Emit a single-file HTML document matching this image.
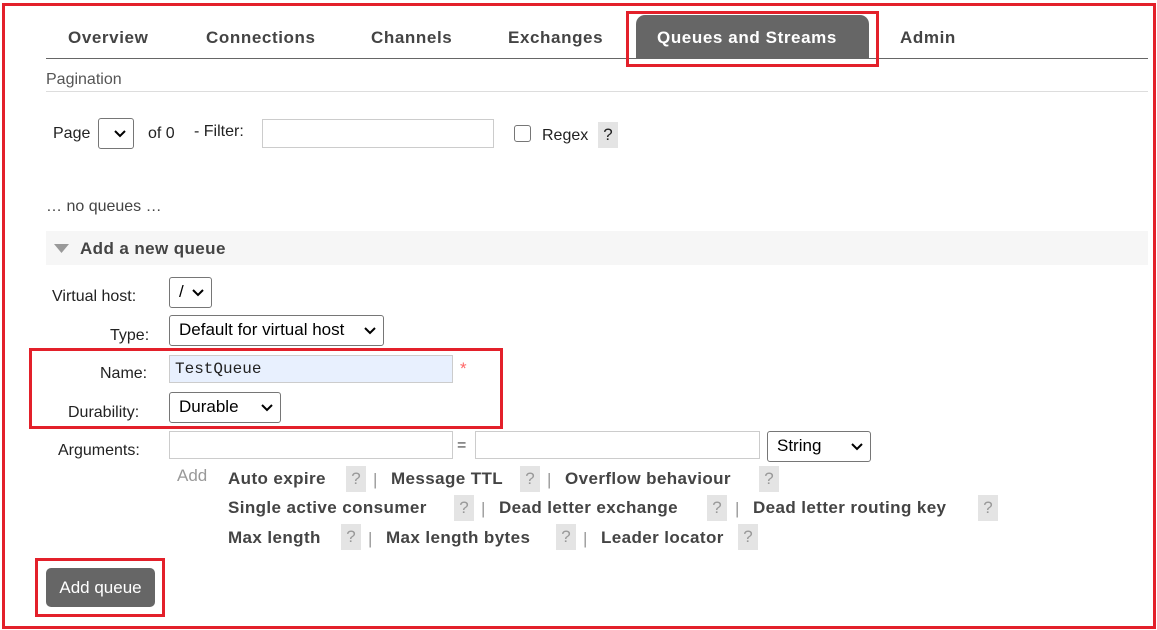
<!DOCTYPE html>
<html><head><meta charset="utf-8"><style>
body{margin:0;width:1157px;height:630px;background:#fff;position:relative;overflow:hidden;font-family:"Liberation Sans",sans-serif;color:#222}
.a{position:absolute;white-space:nowrap;line-height:20px}
.t{font-size:17px;font-weight:bold;color:#444;letter-spacing:.6px}
.b{font-size:17px;font-weight:bold;color:#444;letter-spacing:.4px}
.n{font-size:16px;color:#222}
.r{position:absolute;border:3px solid #e3202a;box-sizing:border-box}
.box{position:absolute;box-sizing:border-box}
.sel{position:absolute;box-sizing:border-box;border:1px solid #767676;border-radius:3px;background:#fff;font-size:17px;line-height:28px;padding-left:9px;color:#000}
.sel svg{position:absolute;right:7px;top:11px}
.inp{position:absolute;box-sizing:border-box;border:1px solid #ccc;background:#fff}
.q{position:absolute;width:20px;height:26px;background:#e4e4e4;color:#999;font-size:17px;text-align:center;line-height:26px}
.p{position:absolute;color:#999;font-size:17px;line-height:20px}
</style></head><body>
<div class="r" style="left:2px;top:3px;width:1154px;height:626px;border-width:3px"></div>

<div class="box" style="left:636px;top:15px;width:233px;height:44px;background:#666;border-radius:9px 9px 0 0"></div>
<div class="box" style="left:46px;top:58px;width:1102px;height:1px;background:#666"></div>
<div class="a t" style="left:68px;top:28px">Overview</div>
<div class="a t" style="left:206px;top:28px">Connections</div>
<div class="a t" style="left:371px;top:28px">Channels</div>
<div class="a t" style="left:508px;top:28px">Exchanges</div>
<div class="a t" style="left:657px;top:28px;color:#fff">Queues and Streams</div>
<div class="a t" style="left:900px;top:28px">Admin</div>
<div class="r" style="left:626px;top:11px;width:253px;height:56px"></div>

<div class="a n" style="left:46px;top:70px;color:#555;font-size:16px">Pagination</div>
<div class="box" style="left:46px;top:91px;width:1102px;height:1px;background:#ddd"></div>

<div class="a n" style="left:53px;top:124px">Page</div>
<div class="sel" style="left:98px;top:118px;width:36px;height:31px"><svg width="12" height="8" viewBox="0 0 12 8"><path d="M1 1l5 5 5-5" fill="none" stroke="#000" stroke-width="2"/></svg></div>
<div class="a n" style="left:148px;top:124px">of 0</div>
<div class="a n" style="left:194px;top:122px">- Filter:</div>
<div class="inp" style="left:262px;top:119px;width:232px;height:29px"></div>
<div class="box" style="left:514px;top:125px;width:17px;height:17px;border:1px solid #767676;border-radius:3px"></div>
<div class="a n" style="left:542px;top:126px">Regex</div>
<div class="q" style="left:598px;top:122px;color:#222">?</div>

<div class="a n" style="left:46px;top:197px;color:#444">… no queues …</div>

<div class="box" style="left:46px;top:231px;width:1102px;height:34px;background:#f6f6f6"></div>
<svg style="position:absolute;left:54px;top:244px" width="15" height="9"><path d="M0 0h15L7.5 9z" fill="#999"/></svg>
<div class="a b" style="left:80px;top:239px">Add a new queue</div>

<div class="a n" style="left:52px;top:287px">Virtual host:</div>
<div class="sel" style="left:169px;top:277px;width:43px;height:31px">/<svg width="12" height="8" viewBox="0 0 12 8"><path d="M1 1l5 5 5-5" fill="none" stroke="#000" stroke-width="2"/></svg></div>
<div class="a n" style="left:110px;top:326px">Type:</div>
<div class="sel" style="left:169px;top:315px;width:215px;height:31px">Default for virtual host<svg width="12" height="8" viewBox="0 0 12 8"><path d="M1 1l5 5 5-5" fill="none" stroke="#000" stroke-width="2"/></svg></div>

<div class="a n" style="left:100px;top:364px">Name:</div>
<div class="inp" style="left:169px;top:355px;width:284px;height:28px;background:#e8f0fe;font-family:'Liberation Mono',monospace;font-size:16px;line-height:26px;padding-left:5px">TestQueue</div>
<div class="a" style="left:460px;top:359px;color:#f66;font-size:17px">*</div>
<div class="a n" style="left:68px;top:403px">Durability:</div>
<div class="sel" style="left:169px;top:392px;width:112px;height:31px">Durable<svg width="12" height="8" viewBox="0 0 12 8"><path d="M1 1l5 5 5-5" fill="none" stroke="#000" stroke-width="2"/></svg></div>
<div class="r" style="left:29px;top:348px;width:474px;height:81px"></div>

<div class="a n" style="left:58px;top:441px">Arguments:</div>
<div class="inp" style="left:169px;top:431px;width:284px;height:28px"></div>
<div class="a n" style="left:457px;top:436px;color:#444">=</div>
<div class="inp" style="left:475px;top:431px;width:285px;height:28px"></div>
<div class="sel" style="left:767px;top:431px;width:104px;height:31px">String<svg width="12" height="8" viewBox="0 0 12 8"><path d="M1 1l5 5 5-5" fill="none" stroke="#000" stroke-width="2"/></svg></div>

<div class="a n" style="left:177px;top:466px;color:#999;font-size:17px">Add</div>

<div class="a b" style="left:228px;top:469px">Auto expire</div><div class="q" style="left:346px;top:466px">?</div><div class="p" style="left:373px;top:470px">|</div>
<div class="a b" style="left:391px;top:469px">Message TTL</div><div class="q" style="left:520px;top:466px">?</div><div class="p" style="left:547px;top:470px">|</div>
<div class="a b" style="left:565px;top:469px">Overflow behaviour</div><div class="q" style="left:759px;top:466px">?</div>

<div class="a b" style="left:228px;top:498px">Single active consumer</div><div class="q" style="left:454px;top:495px">?</div><div class="p" style="left:481px;top:499px">|</div>
<div class="a b" style="left:499px;top:498px">Dead letter exchange</div><div class="q" style="left:707px;top:495px">?</div><div class="p" style="left:735px;top:499px">|</div>
<div class="a b" style="left:753px;top:498px">Dead letter routing key</div><div class="q" style="left:978px;top:495px">?</div>

<div class="a b" style="left:228px;top:528px">Max length</div><div class="q" style="left:341px;top:524px">?</div><div class="p" style="left:368px;top:529px">|</div>
<div class="a b" style="left:386px;top:528px">Max length bytes</div><div class="q" style="left:556px;top:524px">?</div><div class="p" style="left:583px;top:529px">|</div>
<div class="a b" style="left:601px;top:528px">Leader locator</div><div class="q" style="left:738px;top:524px">?</div>

<div class="box" style="left:46px;top:568px;width:109px;height:39px;background:#666;border-radius:5px;color:#fff;font-size:17px;line-height:39px;text-align:center">Add queue</div>
<div class="r" style="left:35px;top:558px;width:130px;height:59px"></div>
</body></html>
